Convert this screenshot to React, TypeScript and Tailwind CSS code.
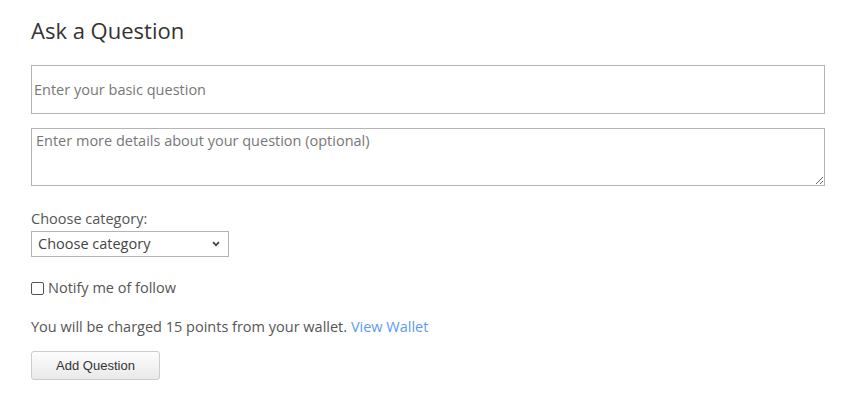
import React from "react";

export default function App() {
  return (
    <div className="w-[850px] h-[400px] bg-white" style={{ fontFamily: '"Open Sans", sans-serif' }}>
      <div className="pl-[31px] pt-[13px] w-[825px] text-[#555] text-[14.5px]">
        <h1 className="text-[22px] leading-[34px] text-[#333] font-normal">Ask a Question</h1>
        <input
          type="text"
          placeholder="Enter your basic question"
          className="mt-[18px] block w-[794px] h-[49px] border border-[#b4b4b4] px-[2px] text-[14.5px] placeholder:text-[#777] outline-none"
        />
        <textarea
          placeholder="Enter more details about your question (optional)"
          className="mt-[14px] block w-[794px] h-[58px] border border-[#b4b4b4] px-[4px] py-[2px] text-[14.5px] leading-[20px] placeholder:text-[#777] outline-none"
        />
        <label className="block mt-[23px] leading-[20px]">Choose category:</label>
        <div className="relative mt-[2px] w-[198px] h-[26px]">
          <select className="appearance-none block w-[198px] h-[26px] border border-[#b4b4b4] pl-[6px] text-[14.5px] text-[#444] bg-white outline-none">
            <option>Choose category</option>
          </select>
          <svg className="absolute right-[9px] top-[10px] pointer-events-none" width="8" height="6" viewBox="0 0 8 6">
            <path d="M1 1.2 L4 4.2 L7 1.2" stroke="#444" strokeWidth="1.8" fill="none" />
          </svg>
        </div>
        <label className="flex items-center mt-[21px] leading-[20px]">
          <span className="inline-block w-[13px] h-[13px] border border-[#555] rounded-[2px] bg-white mr-[4px]" />
          <span>Notify me of follow</span>
        </label>
        <p className="mt-[19px] leading-[20px]">
          You will be charged 15 points from your wallet.{" "}
          <a className="text-[#5b9bf0]" href="#">View Wallet</a>
        </p>
        <button
          className="mt-[14px] w-[129px] h-[29px] border border-[#ccc] rounded-[3px] bg-gradient-to-b from-[#fdfdfd] to-[#e9e9e9] text-[13px] text-[#333]"
          style={{ fontFamily: '"Liberation Sans", Arial, sans-serif' }}
        >
          Add Question
        </button>
      </div>
    </div>
  );
}
